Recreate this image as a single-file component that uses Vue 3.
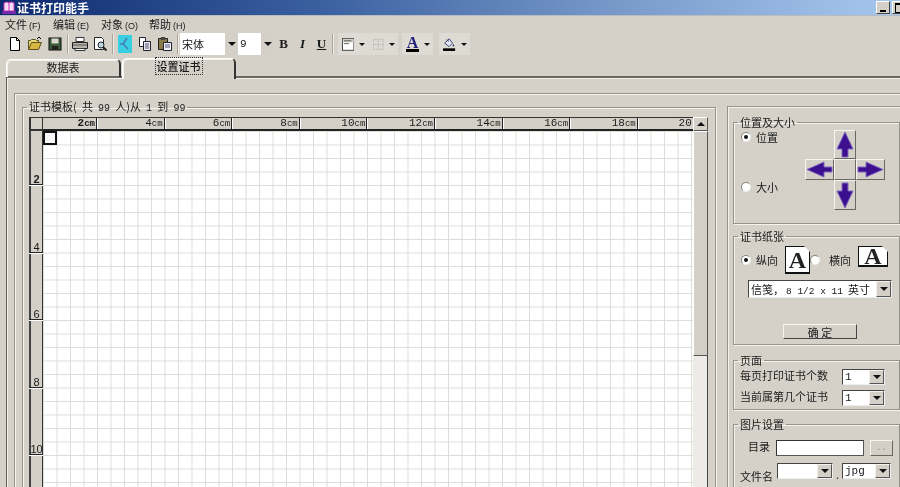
<script setup>
const menus = [['文件', 'F'], ['编辑', 'E'], ['对象', 'O'], ['帮助', 'H']]
const hCells = [2, 4, 6, 8, 10, 12, 14, 16, 18, 20]
const vCells = [2, 4, 6, 8, 10]
</script>

<template>
  <div class="app">
    <header class="titlebar">
      <svg class="appicon" width="14" height="13" viewBox="0 0 14 13">
        <path d="M2 2q3-2 5 0q2-2 5 0v8H2z" fill="#f6dcf4" stroke="#c838b8" />
        <path d="M7 2v8" stroke="#c838b8" />
        <rect x="0" y="10" width="14" height="3" fill="#7a2aa8" />
      </svg>
      <span class="title">证书打印能手</span>
      <div class="winbtns">
        <button class="winbtn"><i class="minglyph"></i></button>
        <button class="winbtn"><i class="restoreglyph"></i></button>
      </div>
    </header>

    <nav class="menubar">
      <span v-for="m in menus" :key="m[0]" class="menuitem">{{ m[0] }}<small>({{ m[1] }})</small></span>
    </nav>

    <div class="toolbar">
      <button class="tb"><svg width="16" height="16" viewBox="0 0 16 16"><path d="M3.500 1.500h6l3 3v10h-9z" fill="#fff" stroke="#000" /><path d="M9.500 1.500v3h3" fill="none" stroke="#000" /></svg></button>
      <button class="tb"><svg width="16" height="16" viewBox="0 0 16 16"><path d="M1.500 13.500v-9h2l1-1h4l1 1h2v2" fill="#e8d878" stroke="#5a5020" /><path d="M1.500 13.500l3-7h10l-3 7z" fill="#d8b840" stroke="#5a5020" /><path d="M10 3l2-2 2 2" fill="none" stroke="#000" /></svg></button>
      <button class="tb"><svg width="16" height="16" viewBox="0 0 16 16"><rect x="2" y="2" width="12" height="12" fill="#3a5a3a" stroke="#111" /><rect x="4.500" y="2.500" width="7" height="5" fill="#d8d8d0" /><rect x="5" y="10" width="6" height="4" fill="#222" /></svg></button>
      <i class="sep"></i>
      <button class="tb"><svg width="18" height="16" viewBox="0 0 18 16"><path d="M5 1.500h8v4H5z" fill="#fff" stroke="#333" /><path d="M1.500 6.500h15v6h-15z" fill="#b8b4ac" stroke="#222" /><path d="M4 12.500h10v2H4z" fill="#fff" stroke="#333" /><path d="M2 9h14" stroke="#555" /></svg></button>
      <button class="tb"><svg width="16" height="16" viewBox="0 0 16 16"><path d="M2.500 1.500h7l2 2v10h-9z" fill="#fff" stroke="#222" /><circle cx="9" cy="9" r="3" fill="#b8d8e8" stroke="#222" /><path d="M11 11l3.500 3.500" stroke="#222" stroke-width="2" /></svg></button>
      <i class="sep"></i>
      <button class="tb"><svg width="14" height="18" viewBox="0 0 14 18"><rect width="14" height="18" fill="#38d0e0" /><path d="M9 3L5 9l5 5M5 9H2" fill="none" stroke="#4a78b8" stroke-width="1.500" /></svg></button>
      <button class="tb"><svg width="16" height="16" viewBox="0 0 16 16"><path d="M2.500 1.500h6v9h-6z" fill="#fff" stroke="#223" /><path d="M6.500 5.500h7v9h-7z" fill="#e8e8f4" stroke="#223" /><path d="M8 8h4M8 10h4M8 12h4" stroke="#557" /></svg></button>
      <button class="tb"><svg width="16" height="16" viewBox="0 0 16 16"><path d="M1.500 2.500h9v11h-9z" fill="#8a7a48" stroke="#222" /><rect x="4" y="1" width="4" height="3" fill="#444" /><path d="M6.500 6.500h8v8h-8z" fill="#f0f0f8" stroke="#223" /><path d="M8 9h5M8 11h5" stroke="#557" /></svg></button>
      <i class="sep"></i>
      <div class="combos">
        <div class="tcombo font-combo"><span>宋体</span><b class="tdrop"><i class="tri"></i></b></div>
        <div class="tcombo size-combo"><span class="mono">9</span><b class="tdrop"><i class="tri"></i></b></div>
      </div>
      <button class="tb fmt bold">B</button>
      <button class="tb fmt ital">I</button>
      <button class="tb fmt und">U</button>
      <i class="sep sep2"></i>
      <div class="tgroup g1">
        <svg width="15" height="15" viewBox="0 0 15 15"><rect x=".5" y=".5" width="14" height="14" fill="#fff" stroke="#222" /><rect x="1" y="1" width="13" height="4" fill="#d4d0c8" /><path d="M2.500 3h9M2.500 6.500h6" stroke="#444" /></svg>
        <i class="tri small"></i>
        <svg class="gridic" width="13" height="13" viewBox="0 0 13 13"><path d="M.5.500h12v12H.5zM6.500.500v12M.5 6.500h12" fill="none" stroke="#a8a59e" stroke-dasharray="1 1" /></svg>
        <i class="tri small"></i>
      </div>
      <div class="tgroup g2">
        <span class="colorA">A</span>
        <i class="tri small"></i>
      </div>
      <div class="tgroup g3">
        <svg width="15" height="16" viewBox="0 0 15 16"><path d="M2 7l5-5 4 5-4 4z" fill="#e8e8f0" stroke="#223070" /><path d="M4 3l3 2" stroke="#223070" /><path d="M12 8c1 1.500 1.500 3 0 3s-1-1.500 0-3z" fill="#223070" /><rect y="13" width="14" height="3" fill="#000" /></svg>
        <i class="tri small"></i>
      </div>
    </div>

    <div class="tabs">
      <div class="tab">数据表</div>
      <div class="tab active"><span class="focus">设置证书</span></div>
    </div>

    <main class="page">
      <section class="outer">
        <fieldset class="fs templ">
          <legend>证书模板( 共 <span class="mono">99</span> 人)从 <span class="mono">1</span> 到 <span class="mono">99</span></legend>
          <div class="sheet">
            <div class="corner"></div>
            <div class="hruler">
              <div v-for="n in hCells" :key="n" class="hcell" :class="{ first: n === 2, last: n === 20 }">
                <span :class="{ strong: n === 2 }">{{ n }}<small v-if="n !== 20">cm</small></span>
              </div>
            </div>
            <div class="sbtn"><i class="tri up"></i></div>
            <div class="vruler">
              <div v-for="n in vCells" :key="n" class="vcell" :class="{ first: n === 2 }">
                <span :class="{ strong: n === 2 }">{{ n }}</span>
              </div>
            </div>
            <div class="canvas"><div class="selection"></div></div>
            <div class="strack"><div class="sthumb"></div></div>
          </div>
        </fieldset>

        <aside class="side">
          <fieldset class="fs pos">
            <legend>位置及大小</legend>
            <div class="posbody">
              <div class="posradios">
                <label class="radio"><i class="dot on"></i>位置</label>
                <label class="radio"><i class="dot"></i>大小</label>
              </div>
              <div class="cross">
                <button class="arrow a-up"><svg width="20" height="27" viewBox="0 0 20 27"><path d="M10 1l8 17h-5v8H7v-8H2z" fill="#3c0f8e" stroke="#7f66c0" /></svg></button>
                <button class="arrow a-left"><svg width="27" height="19" viewBox="0 0 27 19"><path d="M1 9.500L18 2v5h8v5h-8v5z" fill="#3c0f8e" stroke="#7f66c0" /></svg></button>
                <button class="arrow a-mid"></button>
                <button class="arrow a-right"><svg width="27" height="19" viewBox="0 0 27 19"><path d="M26 9.500L9 2v5H1v5h8v5z" fill="#3c0f8e" stroke="#7f66c0" /></svg></button>
                <button class="arrow a-down"><svg width="20" height="27" viewBox="0 0 20 27"><path d="M10 26L2 9h5V1h6v8h5z" fill="#3c0f8e" stroke="#7f66c0" /></svg></button>
              </div>
            </div>
          </fieldset>

          <fieldset class="fs paper">
            <legend>证书纸张</legend>
            <div class="orient">
              <label class="radio"><i class="dot on"></i>纵向</label>
              <div class="page-ic tall"><span>A</span></div>
              <label class="radio r2"><i class="dot"></i><span>横向</span></label>
              <div class="page-ic wide"><span>A</span></div>
            </div>
            <div class="select paper-sel"><span>信笺，<em>8 1/2 x 11</em>英寸</span><b class="drop"><i class="tri"></i></b></div>
            <button class="ok">确 定</button>
          </fieldset>

          <fieldset class="fs pagefs">
            <legend>页面</legend>
            <div class="prow"><span>每页打印证书个数</span><div class="select num"><span class="mono">1</span><b class="drop"><i class="tri"></i></b></div></div>
            <div class="prow"><span>当前属第几个证书</span><div class="select num"><span class="mono">1</span><b class="drop"><i class="tri"></i></b></div></div>
          </fieldset>

          <fieldset class="fs imgfs">
            <legend>图片设置</legend>
            <div class="drow">
              <span class="dlabel">目录</span>
              <div class="input"></div>
              <button class="browse">..</button>
            </div>
            <div class="frow">
              <span>文件名</span>
              <div class="select fname"><span></span><b class="drop"><i class="tri"></i></b></div>
              <span class="period">.</span>
              <div class="select ext"><span class="mono">jpg</span><b class="drop"><i class="tri"></i></b></div>
            </div>
          </fieldset>
        </aside>
      </section>
    </main>
  </div>
</template>

<style>
html, body { margin: 0; background: #d4d0c8; overflow: hidden; }
</style>

<style scoped>
.app {
  width: 900px; height: 487px; overflow: hidden; background: #d5d1c9; color: #1a1a1a;
  display: flex; flex-direction: column;
  font: 11px "Noto Sans CJK SC", "Liberation Sans", sans-serif;
  filter: blur(.3px);
}
button { font: inherit; color: inherit; padding: 0; margin: 0; }
fieldset { margin: 0; min-width: 0; }
.mono { font-family: "Liberation Mono", monospace; }

.titlebar {
  height: 15px; flex: none; display: flex; align-items: center; padding-left: 2px;
  background: linear-gradient(90deg, #0d2a70 0%, #3a5f9f 35%, #7a9ccc 70%, #a6c8ee 100%);
  box-shadow: 0 1px 0 #b8bcc0;
}
.appicon { flex: none; }
.title { margin-left: 1px; color: #fff; font-weight: 700; font-size: 12px; line-height: 15px; }
.winbtns { margin-left: auto; display: flex; gap: 2px; margin-right: -6px; }
.winbtn {
  width: 14px; height: 13px; background: #d4d0c8; position: relative;
  border: 1px solid; border-color: #fff #444 #444 #fff;
}
.minglyph { position: absolute; left: 3px; bottom: 1px; width: 6px; height: 2px; background: #000; }
.restoreglyph { position: absolute; left: 2px; top: 1px; width: 7px; height: 7px; border: 1px solid #000; border-top-width: 2px; }

.menubar { height: 18px; flex: none; display: flex; align-items: center; padding-left: 5px; box-sizing: border-box; }
.menuitem { width: 48px; font-size: 11px; white-space: nowrap; }
.menuitem small { font: 9px "Liberation Sans", sans-serif; margin-left: 2px; }

.toolbar { height: 22px; flex: none; display: flex; align-items: center; padding-left: 5px; }
.tb {
  width: 20px; height: 22px; flex: none; background: none; border: 0;
  display: flex; align-items: center; justify-content: center;
}
.sep { width: 1px; height: 20px; margin: 0 2px; flex: none; background: #aaa69e; box-shadow: 1px 0 0 #eeebe4; }
.combos { display: flex; height: 22px; background: #fff; flex: none; width: 94px; }
.tcombo { display: flex; align-items: center; height: 100%; box-sizing: border-box; padding-left: 2px; justify-content: space-between; }
.font-combo { width: 58px; }
.size-combo { width: 36px; }
.tdrop { width: 13px; height: 100%; background: #d4d0c8; display: flex; align-items: center; justify-content: center; flex: none; }
.tri { display: block; width: 0; height: 0; border: 4px solid transparent; border-top: 4px solid #111; border-bottom: 0; }
.tri.small { border-width: 3px 3px 0; }
.tri.up { border: 4px solid transparent; border-bottom: 4px solid #111; border-top: 0; }

.fmt { font: 700 13px "Liberation Serif", serif; width: 19px; }
.ital { font-style: italic; }
.und { text-decoration: underline; }
.sep2 { margin-left: 1px; margin-right: 5px; }
.tgroup { display: flex; align-items: center; height: 22px; gap: 5px; background: #dedbd4; padding: 0 3px 0 4px; flex: none; box-sizing: border-box; }
.g1 { width: 60px; }
.gridic { margin-left: 3px; }
.g2 { width: 31px; margin-left: 4px; }
.g3 { width: 31px; margin-left: 6px; }
.colorA { font: 700 16px/13px "Liberation Serif", serif; color: #20207a; border-bottom: 3px solid #000; width: 14px; text-align: center; }

.tabs { height: 22px; flex: none; display: flex; padding: 4px 0 0 6px; box-sizing: border-box; align-items: flex-end; position: relative; z-index: 1; }
.tab {
  width: 115px; height: 18px; box-sizing: border-box; text-align: center; line-height: 14px; font-size: 11px;
  border: 1px solid #77746e; border-bottom: 0; border-top-color: #fff; border-left-color: #fff; border-right-width: 2px; border-right-color: #333;
  border-radius: 5px 5px 0 0; box-shadow: inset 1px 1px #f2f0ea;
}
.tab.active { width: 114px; height: 21px; margin: 0 0 -2px 1px; font-weight: 500; background: #d5d1c9; }
.focus { outline: 1px dotted #333; padding: 0 1px; }

.page {
  flex: 1; min-height: 0; display: flex; align-items: flex-start; box-sizing: border-box;
  border-top: 2px solid #6a6762; box-shadow: inset 1px 1px #f5f3ee; margin: -1px 0 0 6px; padding: 15px 0 0 7px;
  border-left: 1px solid #5e5b56;
}

.outer {
  width: 892px; height: 420px; flex: none; box-sizing: border-box; padding: 6px 0 0 7px;
  border: 1px solid #96938c; box-shadow: 1px 1px #f5f3ee, inset 1px 1px #f5f3ee;
  display: flex; align-items: flex-start;
}
.fs {
  border: 1px solid #96938c; box-shadow: 1px 1px #f5f3ee, inset 1px 1px #f5f3ee;
  box-sizing: border-box; padding: 0;
}
.fs legend { padding: 0 2px; margin-left: 4px; font-size: 11px; line-height: 12px; white-space: nowrap; }
.templ { width: 694px; height: 400px; flex: none; padding: 2px 7px 0 6px; }
.templ legend { margin-left: -2px; word-spacing: 2.700px; }
.templ legend .mono { font-size: 10px; }

.sheet {
  width: 679px; height: 390px; display: grid; overflow: hidden;
  grid-template-columns: 14px 650px 15px; grid-template-rows: 14px 1fr;
  box-shadow: inset 2px 0 #5a5854;
}
.corner { background: #d4d0c8; border: solid #333; border-width: 1px 1px 2px 2px; box-sizing: border-box; }
.hruler { display: flex; overflow: hidden; background: #d4d0c8; border-top: 1px solid #333; border-bottom: 2px solid #222; box-sizing: border-box; }
.hcell {
  width: 67.6px; flex: none; box-sizing: border-box; text-align: right;
  border-right: 1px solid #222; box-shadow: 1px 0 #fff; padding-right: 1px;
  font: 11px/11px "Liberation Mono", monospace;
}
.hcell.first { width: 54px; }
.hcell.last { width: 55px; border-right: 0; box-shadow: none; }
.hcell small { font-size: 9px; }
.strong { font-weight: 700; }
.sbtn {
  background: #d4d0c8; border: 1px solid; border-color: #fff #555 #555 #fff; box-sizing: border-box;
  display: flex; align-items: center; justify-content: center;
}
.vruler { background: #d4d0c8; overflow: hidden; box-shadow: inset 2px 0 #444, inset -1px 0 #333; }
.vcell {
  height: 67.6px; box-sizing: border-box; display: flex; align-items: flex-end; justify-content: center;
  border-bottom: 1px solid #222; box-shadow: 0 1px #fff; padding-left: 1px;
  font: 11px/10px "Liberation Sans", sans-serif;
}
.vcell.first { height: 54px; }
.canvas {
  position: relative;
  background-color: #fff;
  background-image: linear-gradient(90deg, #dcdcda 1px, transparent 1px), linear-gradient(#dcdcda 1px, transparent 1px);
  background-size: 13.5px 13.5px;
}
.selection { position: absolute; left: 0; top: 0; width: 14px; height: 14px; box-sizing: border-box; border: 2px solid #111; background: #f8f8f8; }
.strack { background: #ecebe7; box-shadow: inset -1px 0 #444; }
.sthumb { height: 225px; box-sizing: border-box; background: #d4d0c8; border: 1px solid; border-color: #fff #555 #555 #fff; }

.side {
  width: 190px; height: 400px; flex: none; margin: 6px 0 0 11px; box-sizing: border-box;
  border: 1px solid #96938c; box-shadow: inset 1px 1px #f5f3ee; padding: 9px 0 0 5px;
  display: flex; flex-direction: column;
}
.side .fs { width: 167px; flex: none; }
.pos { height: 108px; }
.posbody { display: flex; }
.posradios { width: 71px; flex: none; display: flex; flex-direction: column; padding: 2px 0 0 7px; box-sizing: border-box; gap: 36px; }
.radio { display: flex; align-items: center; height: 14px; white-space: nowrap; }
.dot {
  width: 10px; height: 10px; border-radius: 50%; background: #fff; box-sizing: border-box; flex: none; margin-right: 5px;
  border: 1px solid; border-color: #8a8780 #eee #eee #8a8780; position: relative;
}
.dot.on::after { content: ""; position: absolute; left: 2px; top: 2px; width: 4px; height: 4px; border-radius: 50%; background: #111; }
.cross {
  display: grid; grid-template-columns: 29px 22px 29px; grid-template-rows: 29px 21px 30px;
  margin-top: 2px;
}
.arrow {
  background: #d4d0c8; border: 1px solid; border-color: #f6f4ef #6a6862 #6a6862 #f6f4ef; box-sizing: border-box;
  display: flex; align-items: center; justify-content: center; overflow: hidden;
}
.a-up { grid-column: 2; grid-row: 1; }
.a-left { grid-column: 1; grid-row: 2; }
.a-mid { grid-column: 2; grid-row: 2; }
.a-right { grid-column: 3; grid-row: 2; }
.a-down { grid-column: 2; grid-row: 3; }

.paper { height: 115px; margin-top: 6px; }
.orient { display: flex; align-items: center; padding: 0 0 0 7px; height: 30px; margin-top: 3px; }
.page-ic {
  background: #fff; box-sizing: border-box; border: 1px solid #111; border-width: 1px 1px 2px 1px;
  font: 700 24px/1 "Liberation Serif", serif; display: flex; align-items: center; justify-content: center; color: #222; flex: none;
  clip-path: polygon(0 0, calc(100% - 6px) 0, 100% 6px, 100% 100%, 0 100%);
}
.tall { width: 25px; height: 28px; margin-left: 7px; }
.wide { width: 30px; height: 21px; margin-left: 7px; margin-top: -7px; }
.r2 .dot { margin-right: 9px; }
.r2 { margin-left: 0; }
.select {
  display: flex; align-items: center; justify-content: space-between; background: #fff; box-sizing: border-box;
  border: 1px solid; border-color: #444 #eee #eee #444;
}
.select > span { padding-left: 2px; white-space: nowrap; overflow: hidden; font-size: 11px; }
.select em { font: normal 9.500px "Liberation Mono", monospace; margin: 0 5px 0 2px; }
.drop {
  width: 15px; align-self: stretch; background: #d4d0c8; border: 1px solid; border-color: #f4f2ec #555 #555 #f4f2ec;
  display: flex; align-items: center; justify-content: center; flex: none; box-sizing: border-box;
}
.paper-sel { width: 144px; height: 18px; margin: 5px 0 0 14px; }
.ok {
  display: block; width: 74px; height: 15px; margin: 26px 0 0 49px; line-height: 12px; font-size: 11px;
  background: #d4d0c8; border: 1px solid; border-color: #f6f4ef #444 #444 #f6f4ef;
}

.pagefs { height: 56px; margin-top: 9px; padding: 0 0 0 6px; }
.pagefs legend, .imgfs legend { margin-left: -2px; }
.prow { display: flex; align-items: flex-start; justify-content: space-between; height: 16px; padding-right: 14px; margin-top: 2px; margin-bottom: 5px; }
.prow:first-of-type { margin-top: 3px; }
.prow > span { white-space: nowrap; line-height: 12px; }
.num { width: 43px; height: 16px; }
.imgfs { height: 80px; margin-top: 8px; padding: 10px 0 0 6px; }
.drow { display: flex; align-items: center; height: 16px; }
.dlabel { margin-left: 8px; width: 28px; flex: none; padding-bottom: 5px; }
.input { width: 88px; height: 16px; background: #fff; box-sizing: border-box; border: 1px solid; border-color: #333 #555 #555 #333; }
.browse { width: 23px; height: 16px; margin-left: 6px; font: 9px "Liberation Mono", monospace; line-height: 8px; background: #d4d0c8; border: 1px solid; border-color: #f6f4ef #666 #666 #f6f4ef; color: #888; }
.frow { display: flex; align-items: center; height: 16px; margin-top: 7px; }
.frow > span:first-child { width: 37px; flex: none; padding-top: 9px; }
.fname { width: 56px; height: 16px; }
.period { width: 9px; text-align: center; flex: none; padding-top: 6px; }
.ext { width: 49px; height: 16px; }
</style>
